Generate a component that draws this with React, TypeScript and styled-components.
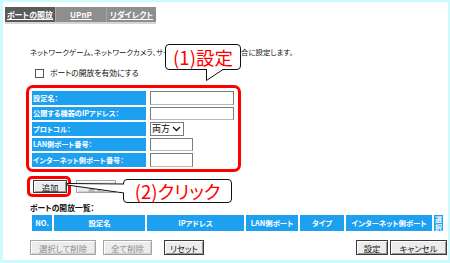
import React from 'react';
import styled, { createGlobalStyle } from 'styled-components';

const BLUE = '#1ea0f0';
const RED = '#ff0000';

const GlobalStyle = createGlobalStyle`
	html, body {
		margin: 0;
		padding: 0;
		background: #fff;
	}
	body {
		font-family: "Noto Sans CJK JP", "Liberation Sans", sans-serif;
		font-feature-settings: "palt";
	}
`;

const TABS = [
	{ label: 'ポートの開放', width: 50, active: true },
	{ label: 'UPnP', width: 50, active: false },
	{ label: 'リダイレクト', width: 49, active: false },
];

const FIELDS = [
	{ label: '設定名：', kind: 'input', width: 84 },
	{ label: '公開する機器のIPアドレス：', kind: 'input', width: 84 },
	{ label: 'プロトコル：', kind: 'select', width: 34 },
	{ label: 'LAN側ポート番号：', kind: 'input', width: 43 },
	{ label: 'インターネット側ポート番号：', kind: 'input', width: 43 },
];

const COLUMNS = [
	{ label: 'NO.', width: 20 },
	{ label: '設定名', width: 91 },
	{ label: 'IPアドレス', width: 97 },
	{ label: 'LAN側ポート', width: 52 },
	{ label: 'タイプ', width: 44 },
	{ label: 'インターネット側ポート', width: 86 },
];

const Callout = ({ text, left, top, width, height, tail }: {
	text: string;
	left: number;
	top: number;
	width: number;
	height: number;
	tail: 'down' | 'left';
}) => (
	<CalloutWrap style={{ left, top, width, height }}>
		<Bubble>{text}</Bubble>
		{tail === 'down' ? (
			<TailDown width="18" height="14" viewBox="0 0 18 14">
				<polygon points="0.5,0 0.5,12.5 17,1 17,0" fill="#fff" />
				<polyline points="0.5,1 0.5,12.5 17,1.5" fill="none" stroke="#111" strokeWidth="1" />
			</TailDown>
		) : (
			<TailLeft width="58" height="24" viewBox="0 0 58 24">
				<polygon points="1,4.5 58,5 58,14 1,6" fill="#fff" />
				<polyline points="58,5 1,4.5 1,6 58,14" fill="none" stroke="#111" strokeWidth="1" />
			</TailLeft>
		)}
	</CalloutWrap>
);

const App = () => {
	return (
		<>
			<GlobalStyle />
			<Frame>
				<TabBar>
					{TABS.map(tab => (
						<Tab key={tab.label} $w={tab.width} $active={tab.active}>{tab.label}</Tab>
					))}
				</TabBar>

				<Description>
					ネットワークゲーム、ネットワークカメラ、サーバーなどを使用する場合に設定します。
				</Description>

				<CheckRow>
					<CheckBox />
					<span>ポートの開放を有効にする</span>
				</CheckRow>

				<SettingsBox>
					<FormGrid>
						{FIELDS.map(field => (
							<React.Fragment key={field.label}>
								<FieldLabel>{field.label}</FieldLabel>
								<FieldValue>
									{field.kind === 'select' ? (
										<SelectBox $w={field.width}>
											<span>両方</span>
											<svg width="9" height="6" viewBox="0 0 9 6">
												<polyline points="1,1 4.5,4.5 8,1" fill="none" stroke="#111" strokeWidth="1.3" />
											</svg>
										</SelectBox>
									) : (
										<TextInput $w={field.width} />
									)}
								</FieldValue>
							</React.Fragment>
						))}
					</FormGrid>
				</SettingsBox>

				<ActionRow>
					<Highlight>
						<Button $w={34}>追加</Button>
					</Highlight>
					<Button $w={40} $disabled>変更</Button>
				</ActionRow>

				<ListTitle>ポートの開放一覧：</ListTitle>

				<HeaderRow>
					{COLUMNS.map(col => (
						<HeaderCell key={col.label} $w={col.width}>{col.label}</HeaderCell>
					))}
					<StackedCell $w={9}>
						<span>選</span>
						<span>択</span>
					</StackedCell>
				</HeaderRow>

				<BottomRow>
					<ButtonGroup>
						<Button $w={66} $h={15} $disabled>選択して削除</Button>
						<Button $w={49} $h={15} $disabled style={{ marginLeft: 7 }}>全て削除</Button>
						<Button $w={40} $h={15} style={{ marginLeft: 12 }}>リセット</Button>
					</ButtonGroup>
					<ButtonGroup>
						<Button $w={32} $h={15}>設定</Button>
						<Button $w={57} $h={15} style={{ marginLeft: 2 }}>キャンセル</Button>
					</ButtonGroup>
				</BottomRow>

				<Callout text="(1)設定" left={162} top={42} width={76} height={26} tail="down" />
				<Callout text="(2)クリック" left={120} top={177} width={109} height={24} tail="left" />
			</Frame>
		</>
	);
};

const Frame = styled.div`
	position: relative;
	width: 450px;
	height: 263px;
	box-sizing: border-box;
	border-style: solid;
	border-color: #cdfbfd;
	border-width: 2px 2px 3px 3px;
	background: #fff;
	display: flex;
	flex-direction: column;
	align-items: flex-start;
	font-size: 7.4px;
	line-height: 10px;
	color: #111;
	overflow: hidden;
`;

const TabBar = styled.div`
	display: flex;
	margin: 5px 0 0 2px;
	height: 15px;
	background: #8e8e8e;
	box-shadow: 0 2px 0 #d6d6d6;
`;

const Tab = styled.div<{ $w: number; $active: boolean }>`
	width: ${p => p.$w}px;
	display: flex;
	align-items: center;
	justify-content: center;
	background: ${p => (p.$active ? '#5a5a5a' : '#8e8e8e')};
	border-left: ${p => (p.$active ? 'none' : '1px solid #a8a8a8')};
	color: #fff;
	font-weight: bold;
	text-decoration: underline;
	font-size: 8px;
`;

const Description = styled.div`
	margin: 25px 0 0 27px;
	white-space: nowrap;
`;

const CheckRow = styled.div`
	display: flex;
	align-items: center;
	gap: 6px;
	margin: 11px 0 0 32px;
	font-size: 7.8px;
`;

const CheckBox = styled.span`
	width: 7px;
	height: 7px;
	border: 1px solid #555;
	background: #fff;
`;

const SettingsBox = styled.div`
	margin: 7px 0 0 23px;
	width: 215px;
	height: 87px;
	box-sizing: border-box;
	border: 3px solid ${RED};
	border-radius: 7px;
	padding: 3px 0 0 3px;
`;

const FormGrid = styled.div`
	display: grid;
	grid-template-columns: 114px 1fr;
	grid-auto-rows: 13.5px;
	column-gap: 4px;
	row-gap: 2px;
`;

const FieldLabel = styled.div`
	display: flex;
	align-items: center;
	padding-left: 1px;
	background: ${BLUE};
	color: #fff;
	font-weight: bold;
	font-size: 7.2px;
	white-space: nowrap;
	overflow: hidden;
`;

const FieldValue = styled.div`
	display: flex;
	align-items: stretch;
`;

const TextInput = styled.div<{ $w: number }>`
	width: ${p => p.$w}px;
	box-sizing: border-box;
	border: 1px solid #7b7b7b;
	border-bottom-color: #b8b8b8;
	background: #fff;
`;

const SelectBox = styled.div<{ $w: number }>`
	width: ${p => p.$w}px;
	box-sizing: border-box;
	border: 1px solid #7b7b7b;
	display: flex;
	align-items: center;
	justify-content: space-between;
	padding: 0 2px 0 1px;
	font-size: 9px;
	background: #fff;
`;

const ActionRow = styled.div`
	display: flex;
	align-items: center;
	gap: 5px;
	margin: 4px 0 0 24px;
`;

const Highlight = styled.div`
	display: flex;
	border: 3px solid ${RED};
	border-radius: 5px;
	padding: 1px 1px 1px 3px;
`;

const Button = styled.div<{ $w: number; $h?: number; $disabled?: boolean }>`
	width: ${p => p.$w}px;
	height: ${p => p.$h ?? 13}px;
	box-sizing: border-box;
	display: flex;
	align-items: center;
	justify-content: center;
	background: #ececec;
	border: 1px solid ${p => (p.$disabled ? '#a6a6a6' : '#3a3a3a')};
	box-shadow: inset 1px 1px 0 #fff, inset -1px -1px 0 ${p => (p.$disabled ? '#d0d0d0' : '#9a9a9a')};
	color: ${p => (p.$disabled ? '#8c8c8c' : '#111')};
	font-size: 8.4px;
	white-space: nowrap;
`;

const ListTitle = styled.div`
	margin: 6px 0 0 27px;
	font-weight: bold;
	font-size: 7.8px;
`;

const HeaderRow = styled.div`
	display: flex;
	gap: 2px;
	height: 16px;
	margin: 2px 0 0 29px;
`;

const HeaderCell = styled.div<{ $w: number }>`
	width: ${p => p.$w}px;
	display: flex;
	align-items: center;
	justify-content: center;
	background: ${BLUE};
	color: #fff;
	font-weight: bold;
	white-space: nowrap;
`;

const StackedCell = styled.div<{ $w: number }>`
	width: ${p => p.$w}px;
	display: flex;
	flex-direction: column;
	align-items: center;
	justify-content: center;
	background: ${BLUE};
	color: #fff;
	font-weight: bold;
	font-size: 7px;
	line-height: 8px;
`;

const BottomRow = styled.div`
	align-self: stretch;
	display: flex;
	justify-content: space-between;
	margin-top: 9px;
	padding: 0 1px 0 27px;
`;

const ButtonGroup = styled.div`
	display: flex;
`;

const CalloutWrap = styled.div`
	position: absolute;
`;

const Bubble = styled.div`
	width: 100%;
	height: 100%;
	box-sizing: border-box;
	border: 1px solid #111;
	border-radius: 4px;
	background: #fff;
	display: flex;
	align-items: center;
	justify-content: center;
	color: ${RED};
	font-size: 18.5px;
	line-height: 1;
	white-space: nowrap;
`;

const TailDown = styled.svg`
	position: absolute;
	left: 41px;
	top: 24px;
`;

const TailLeft = styled.svg`
	position: absolute;
	left: -57px;
	top: 0;
`;

export default App;
